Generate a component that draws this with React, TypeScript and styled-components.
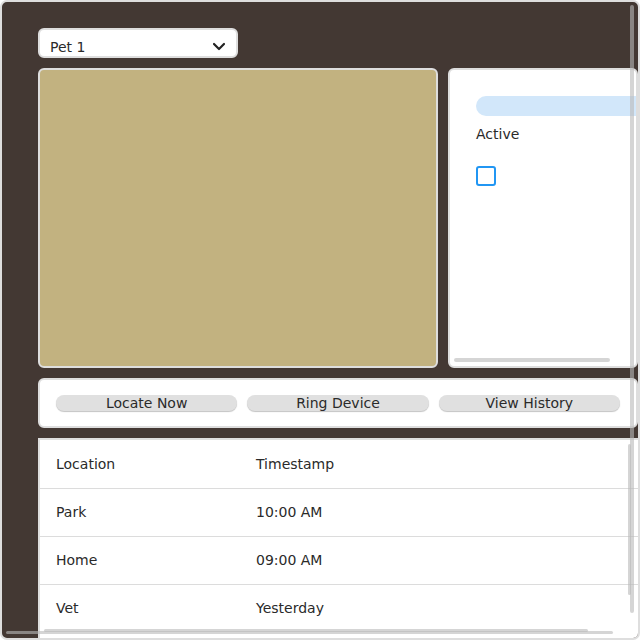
import styled, { createGlobalStyle } from "styled-components";

const GlobalStyle = createGlobalStyle`
  html, body {
    margin: 0;
    padding: 0;
    background: #ffffff;
  }

  * {
    box-sizing: border-box;
  }
`;

const history = [
  { location: "Park", time: "10:00 AM" },
  { location: "Home", time: "09:00 AM" },
  { location: "Vet", time: "Yesterday" },
];

export default function App() {
  return (
    <>
      <GlobalStyle />
      <Shell>
        <Frame>
          <Content>
            <PetSelect>
              <span>Pet 1</span>
              <svg width="14" height="10" viewBox="0 0 14 10">
                <polyline
                  points="2,2 7,7 12,2"
                  fill="none"
                  stroke="#222"
                  strokeWidth="2.2"
                  strokeLinecap="round"
                  strokeLinejoin="round"
                />
              </svg>
            </PetSelect>

            <TopRow>
              <MapBox />
              <StatusPanel>
                <SignalBar />
                <StatusLabel>Active</StatusLabel>
                <CheckBox />
                <Thumb $left={4} $bottom={4} $w={156} $h={4} />
              </StatusPanel>
            </TopRow>

            <ActionBar>
              <ActionButton>Locate Now</ActionButton>
              <ActionButton>Ring Device</ActionButton>
              <ActionButton>View History</ActionButton>
            </ActionBar>

            <TableWrap>
              <HistoryTable>
                <tbody>
                  <Row>
                    <Cell>Location</Cell>
                    <Cell>Timestamp</Cell>
                  </Row>
                  {history.map((h) => (
                    <Row key={h.location}>
                      <Cell>{h.location}</Cell>
                      <Cell>{h.time}</Cell>
                    </Row>
                  ))}
                </tbody>
              </HistoryTable>
              <Thumb $left={588} $top={4} $w={3} $h={151} />
              <Thumb $left={4} $top={189} $w={544} $h={3} />
            </TableWrap>
          </Content>
        </Frame>
        <Thumb $left={630} $top={5} $w={4} $h={608} />
        <Thumb $left={6} $top={631} $w={607} $h={3} />
      </Shell>
    </>
  );
}

const Shell = styled.div`
  position: relative;
  width: 640px;
  height: 640px;
`;

const Frame = styled.div`
  width: 640px;
  height: 640px;
  border: 2px solid #dedede;
  border-radius: 7px;
  background: #433833;
  overflow: hidden;
  font-family: "DejaVu Sans", Verdana, sans-serif;
  font-size: 14px;
  color: #2a2a2a;
`;

const Thumb = styled.div<{
  $left: number;
  $top?: number;
  $bottom?: number;
  $w: number;
  $h: number;
}>`
  position: absolute;
  left: ${(p) => p.$left}px;
  ${(p) => (p.$top !== undefined ? `top: ${p.$top}px;` : "")}
  ${(p) => (p.$bottom !== undefined ? `bottom: ${p.$bottom}px;` : "")}
  width: ${(p) => p.$w}px;
  height: ${(p) => p.$h}px;
  border-radius: 2px;
  background: rgba(185, 185, 185, 0.6);
`;

const Content = styled.div`
  width: 662px;
  padding: 26px 24px 26px 36px;
  display: flex;
  flex-direction: column;
  gap: 10px;
`;

const PetSelect = styled.div`
  width: 200px;
  height: 30px;
  background: #ffffff;
  border: 2px solid #dedede;
  border-radius: 6px;
  padding: 7px 10px 0 10px;
  display: flex;
  align-items: center;
  justify-content: space-between;

  & > span {
    line-height: 16px;
  }
`;

const TopRow = styled.div`
  display: flex;
  gap: 10px;
`;

const MapBox = styled.div`
  width: 400px;
  height: 300px;
  background: #c2b280;
  border: 2px solid #dedede;
  border-radius: 6px;
  flex-shrink: 0;
`;

const StatusPanel = styled.div`
  position: relative;
  width: 190px;
  height: 300px;
  flex-shrink: 0;
  background: #ffffff;
  border: 2px solid #dedede;
  border-radius: 6px;
  padding: 26px 0 0 26px;
  overflow: hidden;
  display: flex;
  flex-direction: column;
  align-items: flex-start;
`;

const SignalBar = styled.div`
  width: 190px;
  height: 20px;
  flex-shrink: 0;
  border-radius: 10px;
  background: #d2e7fa;
`;

const StatusLabel = styled.p`
  margin: 10px 0 0 0;
  line-height: 16px;
`;

const CheckBox = styled.div`
  width: 20px;
  height: 20px;
  margin-top: 24px;
  border: 2px solid #2196f3;
  border-radius: 3px;
  flex-shrink: 0;
`;

const ActionBar = styled.div`
  width: 600px;
  height: 50px;
  background: #ffffff;
  border: 2px solid #dedede;
  border-radius: 6px;
  padding: 0 16px;
  display: flex;
  align-items: center;
  gap: 10px;
`;

const ActionButton = styled.button`
  flex: 1;
  height: 16px;
  padding: 0;
  border: none;
  border-radius: 8px;
  background: #e0e0e0;
  box-shadow: 0 1px 1px #c4c4c4;
  font-family: inherit;
  font-size: 14px;
  line-height: 16px;
  color: #2a2a2a;
  text-align: center;
`;

const TableWrap = styled.div`
  position: relative;
  width: 600px;
  height: 200px;
  background: #ffffff;
  border-top: 2px solid #dedede;
  border-left: 2px solid #dedede;
  overflow: hidden;
`;

const HistoryTable = styled.table`
  width: 650px;
  border-collapse: collapse;
`;

const Row = styled.tr`
  height: 48px;
  border-bottom: 1px solid #dcdcdc;

  &:last-child {
    border-bottom: none;
  }
`;

const Cell = styled.td`
  padding: 0 16px;
  vertical-align: middle;
  line-height: 18px;

  &:first-child {
    width: 200px;
  }
`;
